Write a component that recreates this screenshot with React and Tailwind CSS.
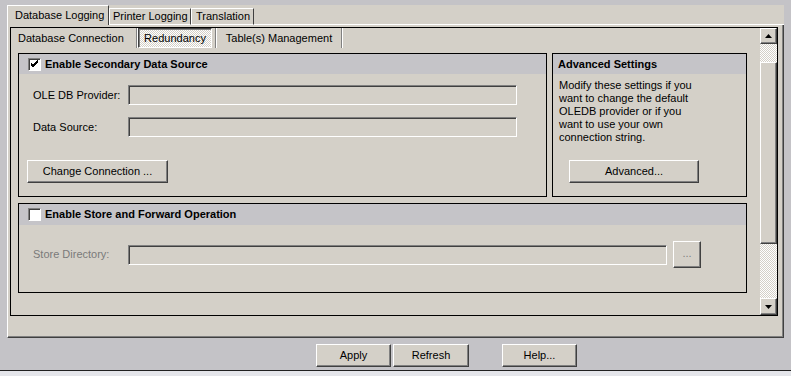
import React from "react";

const raised =
  "border border-t-white border-l-white border-r-[#404040] border-b-[#404040] shadow-[inset_-1px_-1px_0_#808080]";
const sunken =
  "border border-t-[#808080] border-l-[#808080] border-r-white border-b-white shadow-[inset_1px_1px_0_#404040]";
const hatch =
  "bg-[image:repeating-conic-gradient(#ffffff_0%_25%,#d4d0c8_0%_50%)] bg-[length:2px_2px]";

function Check({ checked }) {
  return (
    <div
      className={`w-[13px] h-[13px] bg-white shrink-0 flex items-center justify-center ${sunken}`}
    >
      {checked && (
        <svg width="9" height="9" viewBox="0 0 9 9">
          <path
            d="M1 4 L3 6 L8 1 M1 5 L3 7 L8 2 M1 3 L3 5 L8 0"
            stroke="#000"
            strokeWidth="1"
            fill="none"
          />
        </svg>
      )}
    </div>
  );
}

function Btn({ className = "", children, disabled }) {
  return (
    <div
      className={`bg-[#d4d0c8] flex items-center justify-center ${raised} ${className} ${
        disabled ? "text-[#808080]" : "text-black"
      }`}
    >
      {children}
    </div>
  );
}

function Arrow({ up }) {
  return (
    <svg width="7" height="4" viewBox="0 0 7 4">
      {up ? (
        <path d="M3.5 0 L7 4 L0 4 Z" fill="#000" />
      ) : (
        <path d="M0 0 L7 0 L3.5 4 Z" fill="#000" />
      )}
    </svg>
  );
}

export default function App() {
  return (
    <div className="w-[791px] h-[376px] bg-[#c4c3c7] flex flex-col overflow-hidden font-['Liberation_Sans',Arial,sans-serif] text-[11px] leading-none text-black">
      {/* Tab control */}
      <div className="ml-[7px] mt-[5px] w-[777px] flex flex-col bg-[#d4d0c8]">
        {/* top tab strip */}
        <div className="flex h-[20px] items-end">
          <div className="w-[102px] h-[20px] border-t border-l border-r border-t-white border-l-white border-r-[#404040] flex items-center pl-[7px]">
            Database Logging
          </div>
          <div className="w-[82px] h-[17px] border-t border-l border-r border-b border-t-white border-l-white border-r-[#404040] border-b-white flex items-center pl-[3px]">
            Printer Logging
          </div>
          <div className="w-[63px] h-[17px] border-t border-l border-r border-b border-t-white border-l-white border-r-[#404040] border-b-white flex items-center pl-[4px]">
            Translation
          </div>
          <div className="flex-1 h-[1px] bg-white" />
        </div>

        {/* tab body */}
        <div className="h-[313px] border-l border-r border-b border-l-white border-r-[#404040] border-b-[#404040] shadow-[inset_-1px_-1px_0_#808080] pt-[2px] pl-[2px]">
          <div className="w-[768px] h-[289px] border border-black flex">
            {/* scrolled content */}
            <div className="w-[749px] h-[287px] flex flex-col">
              {/* inner tabs */}
              <div className="flex h-[20px]">
                <div className="w-[126px] flex items-center pl-[7px] border-r border-r-[#808080] shadow-[1px_0_0_#ffffff]">
                  Database Connection
                </div>
                <div className="ml-[1px] w-[78px] flex border-r border-r-[#808080] shadow-[1px_0_0_#ffffff]">
                  <div
                    className={`w-[74px] flex items-center justify-center border border-t-[#404040] border-l-[#404040] border-r-white border-b-white shadow-[inset_1px_1px_0_#808080] ${hatch}`}
                  >
                    Redundancy
                  </div>
                </div>
                <div className="ml-[1px] w-[125px] flex items-center justify-center border-r border-r-[#808080] shadow-[1px_0_0_#ffffff]">
                  Table(s) Management
                </div>
              </div>

              <div className="pl-[7px] pt-[5px] flex flex-col gap-[6px]">
                <div className="flex gap-[5px]">
                  {/* Secondary data source */}
                  <div className="w-[529px] h-[144px] border border-black flex flex-col">
                    <div className="h-[20px] bg-[#c5c4c8] flex items-center pl-[9px] gap-[4px]">
                      <Check checked />
                      <span className="font-bold">Enable Secondary Data Source</span>
                    </div>
                    <div className="flex flex-col pl-[14px] pt-[11px]">
                      <div className="flex items-center h-[20px]">
                        <span className="w-[95px]">OLE DB Provider:</span>
                        <div className={`w-[389px] h-[20px] ${sunken}`} />
                      </div>
                      <div className="flex items-center h-[20px] mt-[12px]">
                        <span className="w-[95px]">Data Source:</span>
                        <div className={`w-[389px] h-[20px] ${sunken}`} />
                      </div>
                      <Btn className="w-[141px] h-[23px] mt-[23px] -ml-[6px]">
                        Change Connection ...
                      </Btn>
                    </div>
                  </div>

                  {/* Advanced settings */}
                  <div className="w-[195px] h-[144px] border border-black flex flex-col">
                    <div className="h-[20px] bg-[#c5c4c8] flex items-center pl-[5px] font-bold">
                      Advanced Settings
                    </div>
                    <div className="pl-[6px] pt-[5px] leading-[13px]">
                      Modify these settings if you
                      <br />
                      want to change the default
                      <br />
                      OLEDB provider or if you
                      <br />
                      want to use your own
                      <br />
                      connection string.
                    </div>
                    <Btn className="w-[130px] h-[23px] ml-[16px] mt-[16px]">Advanced...</Btn>
                  </div>
                </div>

                {/* Store and forward */}
                <div className="w-[729px] h-[90px] border border-black flex flex-col">
                  <div className="h-[21px] bg-[#c5c4c8] flex items-center pl-[9px] gap-[4px]">
                    <Check />
                    <span className="font-bold">Enable Store and Forward Operation</span>
                  </div>
                  <div className="flex items-center pl-[14px] mt-[16px] h-[27px]">
                    <span className="w-[95px] text-[#7a7a7a]">Store Directory:</span>
                    <div className={`w-[539px] h-[20px] ${sunken}`} />
                    <Btn disabled className="w-[28px] h-[27px] ml-[6px] pb-[2px]">
                      ...
                    </Btn>
                  </div>
                </div>
              </div>
            </div>

            {/* scrollbar */}
            <div className="w-[17px] h-[287px] flex flex-col">
              <div className={`h-[16px] bg-[#d4d0c8] flex items-center justify-center ${raised}`}>
                <Arrow up />
              </div>
              <div className={`h-[18px] ${hatch}`} />
              <div className={`h-[182px] bg-[#d4d0c8] ${raised}`} />
              <div className={`h-[54px] ${hatch}`} />
              <div className={`h-[17px] bg-[#d4d0c8] flex items-center justify-center ${raised}`}>
                <Arrow />
              </div>
            </div>
          </div>
        </div>
      </div>

      {/* bottom buttons */}
      <div className="h-[32px] flex pt-[6px] pl-[316px]">
        <Btn className="w-[75px] h-[23px]">Apply</Btn>
        <Btn className="w-[76px] h-[23px] ml-[2px]">Refresh</Btn>
        <Btn className="w-[75px] h-[23px] ml-[33px]">Help...</Btn>
      </div>
      <div className="h-[1px] bg-[#202020]" />
      <div className="flex-1 bg-[#e4e5ea]" />
    </div>
  );
}
